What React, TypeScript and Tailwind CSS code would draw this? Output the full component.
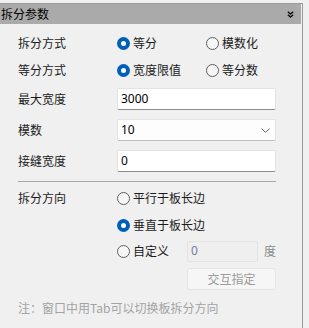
import React from "react";

const cjk = "font-['Microsoft_YaHei','Noto_Sans_CJK_SC',sans-serif]";

const Radio = ({ checked }: { checked?: boolean }) =>
  checked ? (
    <span className="w-[13px] h-[13px] rounded-full bg-[#005fb8] flex items-center justify-center shrink-0">
      <span className="w-[5px] h-[5px] rounded-full bg-white" />
    </span>
  ) : (
    <span className="w-[13px] h-[13px] rounded-full border border-[#5f5f5f] bg-[#f6f6f6] shrink-0" />
  );

const Option = ({ label, checked, width }: { label: string; checked?: boolean; width?: string }) => (
  <div className={`flex items-center gap-[3px] ${width || ""}`}>
    <Radio checked={checked} />
    <span className="text-[12px] text-[#1b1b1b] leading-none">{label}</span>
  </div>
);

const Row = ({ label, children, className }: { label?: string; children: React.ReactNode; className?: string }) => (
  <div className={`flex items-center ${className || ""}`}>
    <span className="w-[99px] shrink-0 text-[12px] text-[#1b1b1b] leading-none">{label}</span>
    {children}
  </div>
);

const TextBox = ({ value }: { value: string }) => (
  <div className="w-[159px] h-[22px] bg-white border border-[#e3e3e3] border-b-[#8c8c8c] rounded-[2px] flex items-center px-[3px]">
    <span className="text-[12px] text-black font-['Noto_Sans',sans-serif] leading-none">{value}</span>
  </div>
);

export default function App() {
  return (
    <div className={`w-[309px] h-[328px] bg-[#f0f0f0] pt-[3px] overflow-hidden ${cjk}`}>
      <div className="w-[303px] h-[325px] border-t border-r border-[#9a9a9a]">
        {/* header */}
        <div className="h-[20px] mr-[1px] bg-[#aaaaaa] flex items-center justify-between pl-[1px] pr-[7px]">
          <span className="text-[12px] text-black leading-none">拆分参数</span>
          <svg width="7" height="7" viewBox="0 0 7 7" fill="none" stroke="#111" strokeWidth="1.4">
            <path d="M0.8 0.8 L3.5 3 L6.2 0.8" />
            <path d="M0.8 3.8 L3.5 6 L6.2 3.8" />
          </svg>
        </div>

        <div className="pl-[18px] flex flex-col">
          <Row label="拆分方式" className="h-[26px] mt-[6px]">
            <Option label="等分" checked width="w-[89px]" />
            <Option label="模数化" />
          </Row>
          <Row label="等分方式" className="h-[26px] mt-[1px]">
            <Option label="宽度限值" checked width="w-[89px]" />
            <Option label="等分数" />
          </Row>
          <Row label="最大宽度" className="mt-[5px]">
            <TextBox value="3000" />
          </Row>
          <Row label="模数" className="mt-[9px]">
            <div className="w-[159px] h-[22px] bg-[#fdfdfd] border border-[#e3e3e3] border-b-[#bdbdbd] rounded-[2px] flex items-center justify-between pl-[3px] pr-[5px]">
              <span className="text-[12px] text-black font-['Noto_Sans',sans-serif] leading-none">10</span>
              <svg width="9" height="5" viewBox="0 0 9 5" fill="none" stroke="#666" strokeWidth="1">
                <path d="M0.5 0.5 L4.5 4.5 L8.5 0.5" />
              </svg>
            </div>
          </Row>
          <Row label="接缝宽度" className="mt-[9px]">
            <TextBox value="0" />
          </Row>
          <div className="mt-[9px] w-[258px] h-px bg-[#a8a8a8]" />
          <Row label="拆分方向" className="h-[26px] mt-[3px]">
            <Option label="平行于板长边" />
          </Row>
          <Row className="h-[26px] mt-[1px]">
            <Option label="垂直于板长边" checked />
          </Row>
          <Row className="h-[26px]">
            <Option label="自定义" width="w-[70px]" />
            <div className="w-[71px] h-[21px] border border-[#e4e4e4] bg-[#efefef] rounded-[2px] flex items-center px-[3px]">
              <span className="text-[12px] text-[#7a7a9a] font-['Noto_Sans',sans-serif] leading-none">0</span>
            </div>
            <span className="ml-[6px] text-[12px] text-[#8a8a8a] leading-none">度</span>
          </Row>
          <Row className="mt-[4px]">
            <div className="ml-[70px] w-[89px] h-[22px] bg-[#f6f6f6] border border-[#e5e5e5] rounded-[3px] flex items-center justify-center">
              <span className="text-[12px] text-[#9b9b9b] leading-none">交互指定</span>
            </div>
          </Row>
          <div className="mt-[11px] text-[12px] leading-[14px] text-[#a3a3a3] whitespace-nowrap">
            注：窗口中用Tab可以切换板拆分方向
          </div>
        </div>
      </div>
    </div>
  );
}
